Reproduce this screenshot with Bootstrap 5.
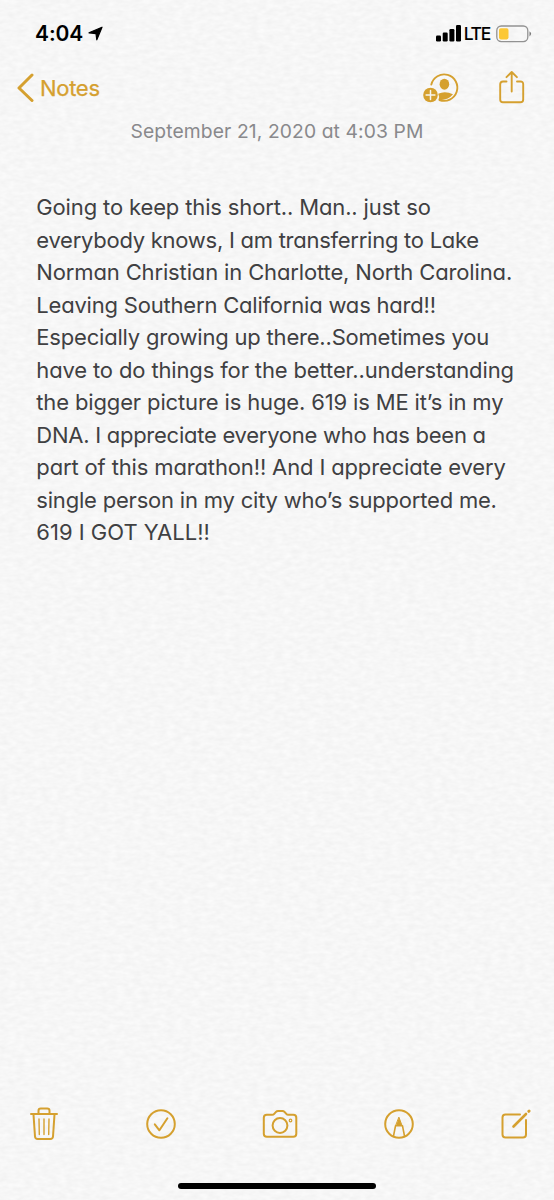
<!DOCTYPE html>
<html lang="en">
<head>
<meta charset="utf-8">
<meta name="viewport" content="width=device-width, initial-scale=1">
<title>Notes</title>
<link href="https://cdn.jsdelivr.net/npm/bootstrap@5.3.0/dist/css/bootstrap.min.css" rel="stylesheet">
<style>
  body { background: #f6f6f6; font-family: Inter, "Liberation Sans", sans-serif; color: #404042; }
  .phone { width: 554px; height: 1200px; }
  .paper { inset: 0; z-index: 0; }
  .screen { z-index: 1; }
  .gold { color: #d5a02f; }
  .status-row { height: 54px; padding: 13px 22px 0 35px; color: #000; }
  .clock { font-size: 21px; font-weight: 600; line-height: 40px; letter-spacing: -.1px; }
  .locate { margin-left: 5px; }
  .carrier { font-size: 17.5px; font-weight: 500; line-height: 40px; letter-spacing: -1.3px; margin: 0 6px 0 2px; }
  .nav-row { height: 62px; padding: 4px 28px 0 16px; }
  .back-label { font-size: 22px; line-height: 60px; letter-spacing: -.3px; padding-top: 1px; -webkit-text-stroke: .25px #d5a02f; }
  .share { margin-left: 38px; }
  .stamp { height: 30px; line-height: 30px; font-size: 19.3px; letter-spacing: .1px; color: #89898c; font-feature-settings: "cv11"; }
  .note { padding: 45px 0 0 36.3px; font-size: 22px; line-height: 32.55px; font-feature-settings: "cv11"; white-space: nowrap; }
  .t1 { letter-spacing: -.14px; }
  .t2 { letter-spacing: -.2px; }
  .t3 { letter-spacing: -.26px; }
  .tool-row { height: 92px; padding: 15px 22px 0 28px; }
  .home-bar { width: 198px; height: 6px; background: #000; margin: 0 auto 11px; }
  svg { display: block; flex: none; fill: none; stroke: currentColor; stroke-width: 2; stroke-linecap: round; stroke-linejoin: round; }
</style>
</head>
<body>
<div class="phone position-relative overflow-hidden">
  <svg class="paper position-absolute" width="554" height="1200" aria-hidden="true">
    <filter id="grain" x="0" y="0" width="100%" height="100%" color-interpolation-filters="sRGB">
      <feTurbulence type="fractalNoise" baseFrequency=".12 .24" numOctaves="2" seed="8"/>
      <feColorMatrix type="matrix" values="0.05 0 0 0 0.941  0.05 0 0 0 0.941  0.05 0 0 0 0.941  0 0 0 0 1"/>
    </filter>
    <rect width="554" height="1200" stroke="none" filter="url(#grain)"/>
  </svg>

  <div class="screen position-relative d-flex flex-column h-100">
    <header class="status-row d-flex justify-content-between">
      <div class="d-flex align-items-center h-100">
        <span class="clock">4:04</span>
        <svg class="locate" width="15" height="15" viewBox="0 0 15 15"><path d="M14 1.200 8.800 13.800 8 7.600 1 6.800z" fill="#000" stroke="#000" stroke-width="1.200"/></svg>
      </div>
      <div class="d-flex align-items-center h-100">
        <svg width="26" height="17" viewBox="0 0 26 17"><g fill="#000" stroke="none"><rect x="0" y="10.500" width="5" height="6" rx="1.200"/><rect x="6.700" y="7.500" width="5" height="9" rx="1.200"/><rect x="13.400" y="4" width="5" height="12.500" rx="1.200"/><rect x="20" y="0" width="5" height="16.500" rx="1.200"/></g></svg>
        <span class="carrier">LTE</span>
        <svg width="36" height="18" viewBox="0 0 36 18"><rect x=".8" y="1" width="31" height="15.600" rx="4.500" stroke="#929292" stroke-width="1.300"/><rect x="3" y="3.200" width="9.500" height="11.200" rx="1.800" fill="#fcc836" stroke="none"/><path d="M33.500 6.200q3.200 2.600 0 5.200z" fill="#777" stroke="none"/></svg>
      </div>
    </header>

    <nav class="nav-row d-flex justify-content-between align-items-center gold">
      <a class="d-flex align-items-center gold text-decoration-none" href="#">
        <svg width="24" height="30" viewBox="0 0 24 30"><path d="M16 3 3 16 16 28.500" stroke-width="3"/></svg>
        <span class="back-label">Notes</span>
      </a>
      <div class="d-flex align-items-center">
        <svg width="37" height="34" viewBox="0 0 37 34">
          <path d="M8.300 14.600A13.200 13.200 0 1 1 16.500 30" stroke-width="1.900"/>
          <ellipse cx="21.400" cy="14.200" rx="4.800" ry="5.500" fill="currentColor" stroke="none"/>
          <path d="M15.200 23.800q6.600-3.400 14.800.4-5.500 6.700-14.500 5.500 1.400-2.800-.3-5.900z" fill="currentColor" stroke="none"/>
          <circle cx="7.500" cy="25" r="7.300" fill="currentColor" stroke="none"/>
          <path d="M7.500 20.600v8.800M3.100 25h8.800" stroke="#f8f6f0" stroke-width="1.500"/>
        </svg>
        <svg class="share" width="28" height="34" viewBox="0 0 28 34"><path d="M8.500 11.500H5Q2.200 11.500 2.200 14.300v15.200Q2.200 32.300 5 32.300h17.400q2.800 0 2.800-2.800V14.300Q25.200 11.500 22.400 11.500H19M13.700 21.500V2M8.500 7.200 13.700 2l5.200 5.200" stroke-width="1.900"/></svg>
      </div>
    </nav>

    <div class="stamp text-center">September 21, 2020 at 4:03 PM</div>

    <main class="note flex-grow-1">
      <div class="t1">Going to keep this short.. Man.. just so</div>
      <div class="t3">everybody knows, I am transferring to Lake</div>
      <div class="t1">Norman Christian in Charlotte, North Carolina.</div>
      <div class="t2">Leaving Southern California was hard!!</div>
      <div class="t2">Especially growing up there..Sometimes you</div>
      <div class="t1">have to do things for the better..understanding</div>
      <div class="t1">the bigger picture is huge. 619 is ME it’s in my</div>
      <div class="t3">DNA. I appreciate everyone who has been a</div>
      <div class="t1">part of this marathon!! And I appreciate every</div>
      <div class="t2">single person in my city who’s supported me.</div>
      <div>619 I GOT YALL!!</div>
    </main>

    <footer class="tool-row d-flex justify-content-between align-items-start gold">
      <svg width="32" height="36" viewBox="0 0 32 36"><path d="M3 8h26M5.500 8.500l1.500 22q.2 2.500 2.700 2.500h12.600q2.500 0 2.700-2.500l1.500-22M10.500 8V4.800q0-2.300 2.300-2.300h6.400q2.300 0 2.300 2.300V8"/><path d="M11 13l.3 15.500M16 13v15.500M21 13l-.3 15.500" stroke-width="1.400"/></svg>
      <svg width="34" height="36" viewBox="0 0 34 36"><circle cx="17" cy="18" r="13.800"/><path d="M10.800 18.300l4.600 6 8-12"/></svg>
      <svg width="36" height="36" viewBox="0 0 36 36"><path d="M4.800 8.800h5.400q1.200 0 2-1l1.800-2q.8-.9 2-.9h4.500q1.200 0 2 .9l1.800 2q.8 1 2 1h5q3 0 3 3V27.800q0 3-3 3H4.800q-3 0-3-3v-16q0-3 3-3z"/><circle cx="18" cy="19.500" r="7.400"/><circle cx="28.500" cy="14.500" r="1.300" stroke-width="1.200"/></svg>
      <svg width="34" height="36" viewBox="0 0 34 36"><circle cx="17" cy="18" r="13.800"/><path d="M17 11.500l3 8h-6z" fill="currentColor" stroke-width="1"/><path d="M11.500 30l2-10.200h7l2 10.200" stroke-width="1.600"/></svg>
      <svg width="32" height="36" viewBox="0 0 32 36"><path d="M20 8.500H5.500Q2.500 8.500 2.500 11.500v17q0 3 3 3h17.500q3 0 3-3V14"/><path d="M13.500 20.500 26 8" stroke-width="2.600"/><path d="M28.800 5.300l.3-.3" stroke-width="3"/></svg>
    </footer>
    <div class="home-bar rounded-pill flex-shrink-0"></div>
  </div>
</div>
<script src="https://cdn.jsdelivr.net/npm/bootstrap@5.3.0/dist/js/bootstrap.bundle.min.js"></script>
</body>
</html>
